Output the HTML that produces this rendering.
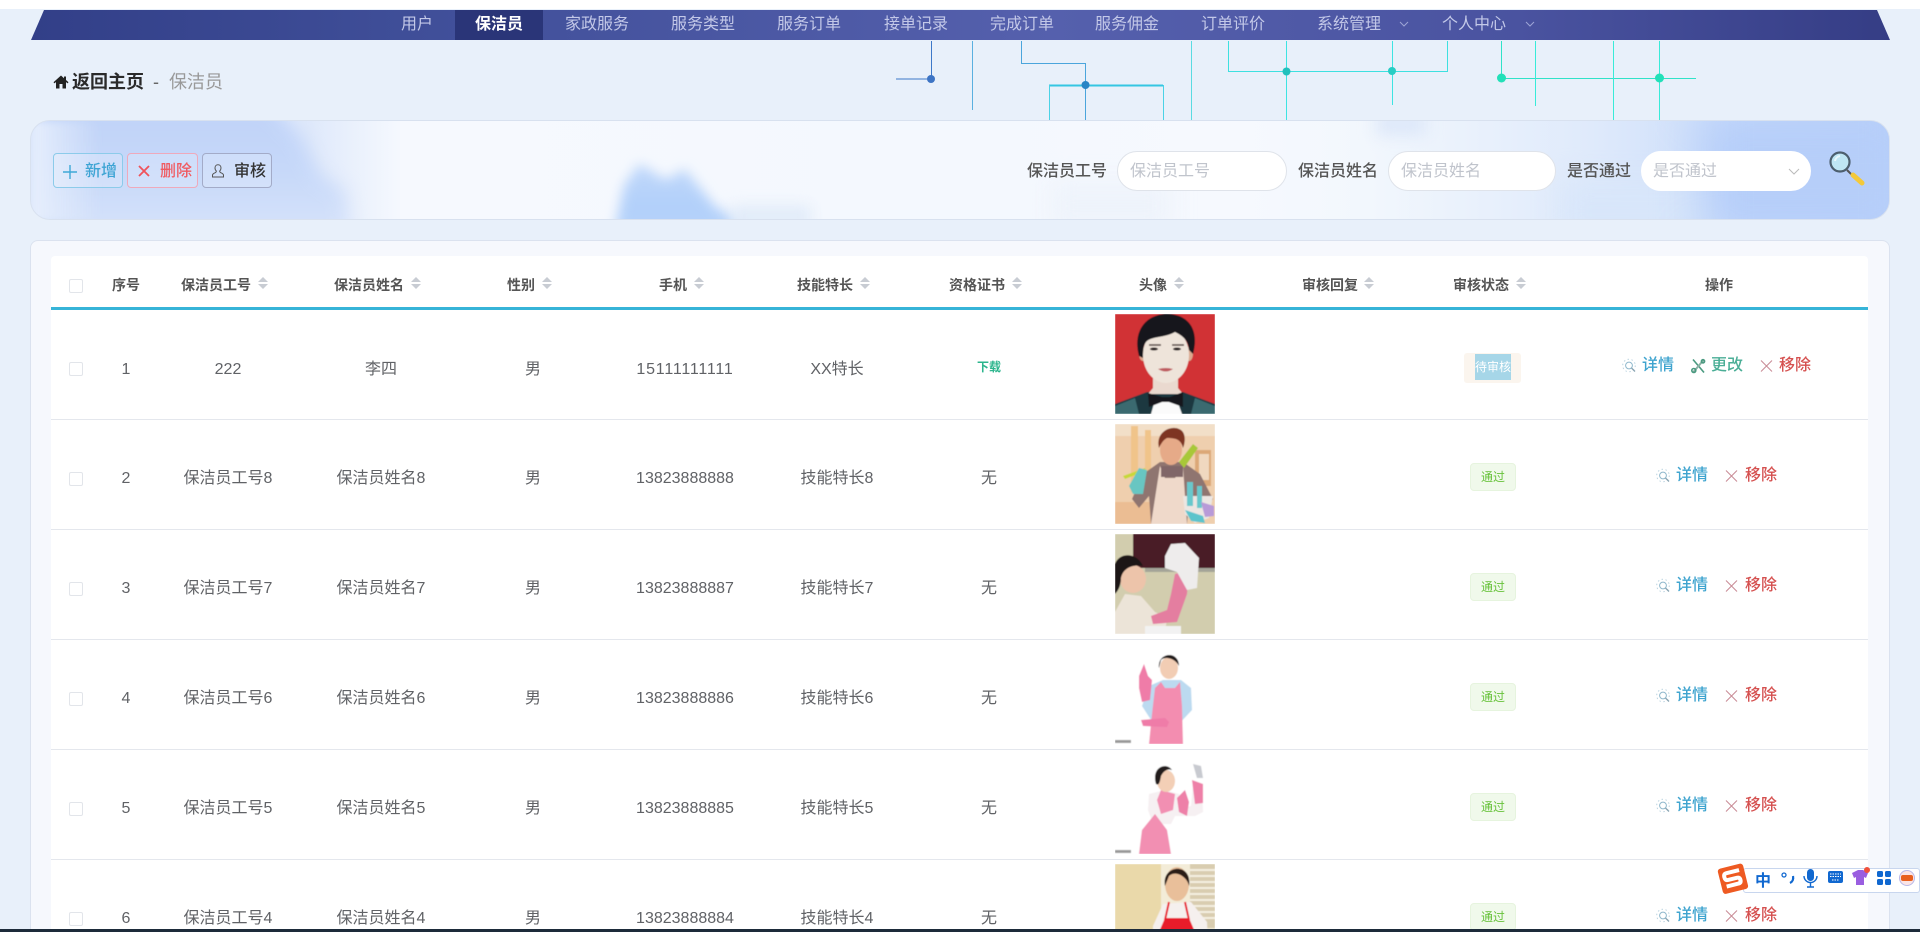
<!DOCTYPE html>
<html lang="zh"><head><meta charset="utf-8"><title>保洁员</title>
<style>
*{box-sizing:border-box}
html,body{margin:0;padding:0;width:1920px;height:932px;overflow:hidden;background:#e8f0fa}
body{position:relative;font-family:"Liberation Sans","Noto Sans CJK SC",sans-serif;color:#606266;font-size:16px}
.a{position:absolute;white-space:nowrap}
.c{position:absolute;white-space:nowrap;transform:translate(-50%,-50%);line-height:24px}
.t{position:absolute;white-space:nowrap;line-height:24px;transform:translateY(-50%);font-weight:500}
.nav{position:absolute;left:0;top:10px;height:30px;color:#c3c8e8;font-size:16px;line-height:30px;transform:translateX(-50%);white-space:nowrap}
.h{position:absolute;top:285px;transform:translateY(-50%);font-size:14px;font-weight:700;color:#555;line-height:20px;white-space:nowrap}
.s{position:absolute;top:277px;width:10px;height:12px}
.s:before,.s:after{content:"";position:absolute;left:0;border-left:5px solid transparent;border-right:5px solid transparent}
.s:before{top:0;border-bottom:5px solid #c8ccd3}
.s:after{bottom:0;border-top:5px solid #c8ccd3}
.cb{position:absolute;left:69px;width:14px;height:14px;border:1px solid #e2e5ea;border-radius:2px;background:#fff}
.ln{position:absolute;left:51px;width:1817px;height:1px;background:#e4e7ed}
.btn{position:absolute;top:153px;height:35px;border-radius:4px;border:1px solid;background:rgba(255,255,255,.18)}
.inp{position:absolute;top:151px;height:40px;border-radius:20px;background:#fff;border:1px solid #dfe3ea;font-size:16px;line-height:40px;color:#c0c4cc;padding-left:12px}
.lab{position:absolute;top:160px;line-height:24px;font-size:16px;font-weight:500;color:#555;white-space:nowrap}
.pic{position:absolute;left:1115px;width:100px;height:100px;display:block}
.tg{position:absolute;transform:translate(-50%,-50%);left:1493px;width:46px;height:28px;background:#f0f9eb;border:1px solid #e6f4de;border-radius:4px;color:#67c23a;font-size:12px;line-height:26px;text-align:center}
.ic{position:absolute;width:15px;height:15px;transform:translateY(-50%)}
.bl{color:#3fa4cf}.gr{color:#4aae96}.rd{color:#d5504f}
</style></head><body>
<!-- top white -->
<div class="a" style="left:0;top:0;width:1920px;height:9px;background:#fff"></div>

<!-- nav -->
<svg class="a" style="left:0;top:10px" width="1920" height="30">
<defs><linearGradient id="ng" x1="0" x2="1" y1="0" y2="0">
<stop offset="0" stop-color="#323f88"/><stop offset=".2" stop-color="#3f4e98"/><stop offset=".55" stop-color="#5560ad"/><stop offset=".8" stop-color="#4a53a0"/><stop offset="1" stop-color="#353d85"/></linearGradient>
<filter id="sf" x="0" y="0" width="100%" height="100%"><feGaussianBlur stdDeviation=".6"/></filter></defs>
<polygon points="44,0 1877,0 1890,30 31,30" fill="url(#ng)"/>
<rect x="455" y="0" width="88" height="30" fill="#2a3578"/>
</svg>
<div class="nav" style="left:417px">用户</div>
<div class="nav" style="left:499px;color:#fff;font-weight:700">保洁员</div>
<div class="nav" style="left:597px">家政服务</div>
<div class="nav" style="left:703px">服务类型</div>
<div class="nav" style="left:809px">服务订单</div>
<div class="nav" style="left:916px">接单记录</div>
<div class="nav" style="left:1022px">完成订单</div>
<div class="nav" style="left:1127px">服务佣金</div>
<div class="nav" style="left:1233px">订单评价</div>
<div class="nav" style="left:1349px">系统管理</div>
<div class="nav" style="left:1474px">个人中心</div>
<svg class="a" style="left:1399px;top:21px" width="10" height="6"><path d="M1 1l4 4 4-4" fill="none" stroke="#9ea5d6"/></svg>
<svg class="a" style="left:1525px;top:21px" width="10" height="6"><path d="M1 1l4 4 4-4" fill="none" stroke="#9ea5d6"/></svg>

<!-- circuits -->
<svg class="a" style="left:0;top:0" width="1920" height="125" fill="none">
<g stroke="#3d78c8"><path d="M931.5 41V79M896 79H931"/></g><circle cx="931" cy="79" r="4" fill="#3d74c4"/>
<path d="M972.5 41V110" stroke="#5ab0e0"/>
<path d="M1021.5 41V63.5H1085.5V120" stroke="#4aa5dc"/>
<path d="M1049 85.5H1163" stroke="#35c6e2" stroke-width="2"/>
<path d="M1049.5 85V120M1163.5 85V120" stroke="#4ad2e6"/>
<circle cx="1085.5" cy="85" r="4" fill="#2a85c5"/>
<path d="M1191.5 41V120" stroke="#5adbe2"/>
<path d="M1228.5 41V71.5H1447.5V41" stroke="#3de0e0"/>
<path d="M1286.5 41V120M1392.5 41V105" stroke="#3de4e2"/>
<circle cx="1286.5" cy="71.5" r="4" fill="#22c0bc"/><circle cx="1392" cy="71" r="4" fill="#28cdc4"/>
<path d="M1501.5 41V78M1501 78.5H1696" stroke="#30e2c8"/>
<path d="M1535.5 41V106M1613.5 41V120M1659.5 41V120" stroke="#38ebd8"/>
<circle cx="1501.5" cy="78" r="4.5" fill="#22e0b8"/><circle cx="1659.5" cy="78" r="4.5" fill="#22e0b8"/>
</svg>

<!-- breadcrumb -->
<svg class="a" style="left:53px;top:74px" width="16" height="16" viewBox="0 0 16 16"><path d="M8 1.5 0.500 8.300l1 1.100L3 8v6.500h3.500V10h3v4.500H13V8l1.500 1.400 1-1.100L13 6V2.500h-2v1.700z" fill="#222"/></svg>
<div class="a" style="left:72px;top:70px;font-size:18px;line-height:24px;font-weight:700;color:#2a2a2a">返回主页</div>
<div class="a" style="left:153px;top:70px;font-size:18px;line-height:24px;color:#666">-</div>
<div class="a" style="left:169px;top:70px;font-size:18px;line-height:24px;color:#999">保洁员</div>

<!-- toolbar -->
<div class="a" style="left:30px;top:120px;width:1860px;height:100px;border-radius:20px;overflow:hidden;background:linear-gradient(90deg,#e4ecfb 0,#dfe9fb 15%,#f6f9fe 20%,#f4f8fe 50%,#f6f9fe 65%,#f2f7fd 72%,#dfeafb 84%,#c4d8fa 94%,#b8cff9 100%);border:1px solid #d8e1ef">
<div class="a" style="left:0;top:-20px;width:320px;height:150px;filter:blur(9px)"><div style="width:100%;height:100%;background:linear-gradient(180deg,#bfd2f8 0,#c6d8f9 45%,#dbe6fb 100%);clip-path:polygon(0 0,74% 0,84% 22%,90% 48%,98% 60%,100% 100%,0 100%)"></div></div>
<div class="a" style="left:0;top:0;width:70px;height:100px;background:linear-gradient(90deg,#e6eefc,rgba(230,238,252,0));filter:blur(4px)"></div>
<div class="a" style="left:555px;top:30px;width:190px;height:90px;filter:blur(6px)"><div style="width:100%;height:100%;background:linear-gradient(180deg,#c6dbfb 0,#b2d0fa 60%,#b8d4fa 100%);clip-path:polygon(14% 100%,20% 38%,28% 14%,42% 32%,52% 20%,68% 62%,100% 100%)"></div></div>
<div class="a" style="left:700px;top:84px;width:80px;height:24px;background:#e2ecf9;filter:blur(7px)"></div>
<div class="a" style="left:1020px;top:60px;width:120px;height:50px;background:#eef3fb;filter:blur(12px)"></div>
<div class="a" style="left:1345px;top:-8px;width:50px;height:22px;background:#dce7f9;filter:blur(8px)"></div>
<div class="a" style="left:1530px;top:60px;width:180px;height:60px;background:#d8e6fa;filter:blur(14px)"></div>
<div class="a" style="left:1670px;top:-10px;width:210px;height:130px;background:#b6cef9;filter:blur(22px)"></div>
</div>

<!-- buttons -->
<div class="btn" style="left:53px;width:70px;border-color:#8ccbea"></div>
<div class="btn" style="left:127px;width:71px;border-color:#efa9bb"></div>
<div class="btn" style="left:202px;width:70px;border-color:#a3abc8"></div>
<svg class="a" style="left:63px;top:165px" width="14" height="14"><path d="M7 0V14M0 7H14" stroke="#3ea8d8" stroke-width="1.400"/></svg>
<div class="a" style="left:85px;top:160px;line-height:24px;font-weight:500;color:#3ea4d4">新增</div>
<svg class="a" style="left:138px;top:165px" width="12" height="12"><path d="M1 1 11 11M11 1 1 11" stroke="#f0525a" stroke-width="1.800"/></svg>
<div class="a" style="left:160px;top:160px;line-height:24px;font-weight:500;color:#f05a60">删除</div>
<svg class="a" style="left:212px;top:164px" width="12" height="14" viewBox="0 0 12 14" fill="none" stroke="#555"><path d="M6 .8c-1.900 0-3 1.400-3 3.200 0 1.300.5 2.300 1.300 3 .2.800-.3 1.300-1.300 1.800-1.300.600-2.500 1-2.500 2.300v1.900h11v-1.900c0-1.300-1.200-1.700-2.500-2.300-1-.5-1.500-1-1.300-1.800.8-.7 1.300-1.700 1.300-3 0-1.800-1.100-3.200-3-3.200z"/></svg>
<div class="a" style="left:234px;top:160px;line-height:24px;font-weight:500;color:#333">审核</div>

<!-- search -->
<div class="lab" style="left:1027px">保洁员工号</div>
<div class="inp" style="left:1117px;width:170px">保洁员工号</div>
<div class="lab" style="left:1298px">保洁员姓名</div>
<div class="inp" style="left:1388px;width:168px">保洁员姓名</div>
<div class="lab" style="left:1567px">是否通过</div>
<div class="inp" style="left:1641px;width:170px;border-color:#fff;padding-left:11px">是否通过</div>
<svg class="a" style="left:1788px;top:168px" width="12" height="7"><path d="M1 1l5 5 5-5" fill="none" stroke="#bbb"/></svg>
<svg class="a" style="left:1825px;top:148px" width="42" height="40" fill="none">
<path d="M22 22 29 29" stroke="#555" stroke-width="2"/>
<path d="M28 27 37 35" stroke="#f4c93a" stroke-width="5" stroke-linecap="round"/>
<circle cx="15" cy="14" r="9.500" fill="#bfe6f4" stroke="#4d5f6e" stroke-width="2.200"/>
<path d="M10 13a6 6 0 0 1 5-5" stroke="#eaf8fc" stroke-width="2"/>
</svg>

<!-- table card -->
<div class="a" style="left:30px;top:240px;width:1860px;height:700px;border:1px solid #dbe2ef;border-radius:8px;background:#f6f8fd"></div>
<div class="a" style="left:51px;top:256px;width:1817px;height:680px;background:#fff;border-radius:4px 4px 0 0"></div>

<div class="cb" style="top:279px"></div>
<div class="h" style="left:112px">序号</div>
<div class="h" style="left:181px">保洁员工号</div><i class="s" style="left:258px"></i>
<div class="h" style="left:334px">保洁员姓名</div><i class="s" style="left:411px"></i>
<div class="h" style="left:507px">性别</div><i class="s" style="left:542px"></i>
<div class="h" style="left:659px">手机</div><i class="s" style="left:694px"></i>
<div class="h" style="left:797px">技能特长</div><i class="s" style="left:860px"></i>
<div class="h" style="left:949px">资格证书</div><i class="s" style="left:1012px"></i>
<div class="h" style="left:1139px">头像</div><i class="s" style="left:1174px"></i>
<div class="h" style="left:1302px">审核回复</div><i class="s" style="left:1364px"></i>
<div class="h" style="left:1453px">审核状态</div><i class="s" style="left:1516px"></i>
<div class="h" style="left:1705px">操作</div>
<div class="a" style="left:51px;top:307px;width:1817px;height:3px;background:#36b4d8"></div>

<div class="ln" style="top:419px"></div><div class="ln" style="top:529px"></div><div class="ln" style="top:639px"></div><div class="ln" style="top:749px"></div><div class="ln" style="top:859px"></div>

<svg width="0" height="0" style="position:absolute"><defs>
<g id="dI" fill="none"><circle cx="7" cy="7" r="6.300" stroke="#bcd4e0" stroke-dasharray="1.500 2.500"/><circle cx="7" cy="7" r="3.400" stroke="#8fb8cc"/><path d="M9.500 9.500l3.500 3.500" stroke="#8aa4b2" stroke-width="1.300"/></g>
<g id="xI" fill="none" stroke="#c88a94"><path d="M2 2 13 13M13 2 2 13"/></g>
<g id="eI" fill="none" stroke="#4a9a80" stroke-width="1.600"><path d="M2 1 13 14"/><path d="M13 1 2 14" stroke="#8ab0a4" stroke-width="2"/><circle cx="2.800" cy="12" r="2"/><circle cx="12" cy="2.800" r="1.600"/></g>
</defs></svg>

<!-- row 1 -->
<div class="cb" style="top:362px"></div>
<div class="c" style="left:126px;top:370px">1</div><div class="c" style="left:228px;top:370px">222</div><div class="c" style="left:381px;top:370px">李四</div><div class="c" style="left:533px;top:370px">男</div><div class="c" style="left:685px;top:370px;letter-spacing:.8px">15111111111</div><div class="c" style="left:837px;top:370px">XX特长</div>
<div class="c" style="left:989px;top:367px;font-size:12px;font-weight:700;color:#2cb58d">下载</div>
<svg class="pic" style="top:314px" viewBox="0 0 100 100"><g filter="url(#sf)">
<rect width="100" height="100" fill="#d13035"/>
<path d="M0 90 32 78 68 78 100 90V100H0z" fill="#1b3840"/>
<path d="M0 92 20 84 24 100H0zM100 92 80 84 76 100H100z" fill="#3a6a70"/>
<path d="M38 56H63V74L68 80H33L38 74z" fill="#ead9cf"/>
<path d="M36 100 40 86H62L67 100z" fill="#fbfbfb"/>
<path d="M33 79 47 83H55L68 78 68 93 54 88H47L34 93z" fill="#15161a"/>
<ellipse cx="28" cy="40" rx="4" ry="7" fill="#dca98f"/><ellipse cx="74" cy="40" rx="4" ry="7" fill="#dca98f"/>
<ellipse cx="51" cy="41" rx="23" ry="28" fill="#eee4da"/>
<path d="M24 42C17 16 32 0 52 0S85 14 78 40L74 36C73 26 68 22 60 18 50 24 36 22 31 28 28 32 28 38 28 44z" fill="#15151c"/>
<path d="M34 31h12M57 31h12" stroke="#4a3a36" stroke-width="1.500"/><ellipse cx="39" cy="35" rx="4" ry="1.500" fill="#2a2020"/><ellipse cx="62" cy="35" rx="4" ry="1.500" fill="#2a2020"/>
<path d="M43 55q8-2 15 0q-7 5-15 0z" fill="#bf5c60"/>
</g></svg>
<div class="a" style="left:1464px;top:353px;width:57px;height:30px;background:#fbf5ee;border-radius:3px"></div>
<div class="a" style="left:1475px;top:354px;width:36px;height:26px;background:#a6d6e8;color:#fff;font-size:12px;line-height:26px;text-align:center;overflow:hidden">待审核</div>
<svg class="ic" style="left:1622px;top:366px"><use href="#dI"/></svg><div class="t bl" style="left:1642px;top:366px">详情</div>
<svg class="ic" style="left:1691px;top:366px"><use href="#eI"/></svg><div class="t gr" style="left:1711px;top:366px">更改</div>
<svg class="ic" style="left:1759px;top:366px"><use href="#xI"/></svg><div class="t rd" style="left:1779px;top:366px">移除</div>

<!-- row 2 -->
<div class="cb" style="top:472px"></div>
<div class="c" style="left:126px;top:479px">2</div><div class="c" style="left:228px;top:479px">保洁员工号8</div><div class="c" style="left:381px;top:479px">保洁员姓名8</div><div class="c" style="left:533px;top:479px">男</div><div class="c" style="left:685px;top:479px">13823888888</div><div class="c" style="left:837px;top:479px">技能特长8</div><div class="c" style="left:989px;top:479px">无</div>
<svg class="pic" style="top:424px" viewBox="0 0 100 100"><g filter="url(#sf)">
<rect width="100" height="100" fill="#efcfae"/>
<rect x="0" y="0" width="100" height="12" fill="#f2dfc8"/>
<path d="M16 2h7v66h-7zM30 6h6v56h-6z" fill="#f0c48a"/><rect x="80" y="26" width="16" height="36" fill="#dca878"/><rect x="84" y="30" width="10" height="26" fill="#f0d8c0"/>
<rect y="78" width="55" height="22" fill="#e8b080" opacity=".6"/>
<path d="M17 75 28 50 45 38 68 38 85 50 98 75 92 84 75 70 72 100H36L34 72 24 84z" fill="#8f7470"/>
<path d="M45 42 36 100H72L70 72 68 42 60 54H50z" fill="#efd9ca"/>
<path d="M46 42h22v11H46z" fill="#806668"/>
<ellipse cx="56" cy="26" rx="11" ry="15" fill="#e6aa88"/>
<path d="M44 24C40 8 56 1 64 5 72 8 70 20 68 24 66 16 62 14 52 14 48 16 46 20 44 24z" fill="#7e3524"/>
<path d="M64 38 78 20 83 24 69 44z" fill="#a8c838"/><path d="M8 52 30 44 31 47 10 55z" fill="#c8d838"/>
<path d="M14 62 24 44 32 46 30 58 28 70H18z" fill="#68c6c2"/>
<path d="M68 72H98L94 94 80 99 70 90z" fill="#ece6e2"/><path d="M70 86 88 92 90 99 76 97z" fill="#5cc4cc"/>
<path d="M72 58h6v24h-6zM82 62h5v22h-5z" fill="#68c8cc"/><path d="M86 78 99 82 99 92 90 93z" fill="#b89ad8"/>
</g></svg>
<div class="tg" style="top:477px">通过</div>
<svg class="ic" style="left:1656px;top:476px"><use href="#dI"/></svg><div class="t bl" style="left:1676px;top:476px">详情</div>
<svg class="ic" style="left:1724px;top:476px"><use href="#xI"/></svg><div class="t rd" style="left:1745px;top:476px">移除</div>

<!-- row 3 -->
<div class="cb" style="top:582px"></div>
<div class="c" style="left:126px;top:589px">3</div><div class="c" style="left:228px;top:589px">保洁员工号7</div><div class="c" style="left:381px;top:589px">保洁员姓名7</div><div class="c" style="left:533px;top:589px">男</div><div class="c" style="left:685px;top:589px">13823888887</div><div class="c" style="left:837px;top:589px">技能特长7</div><div class="c" style="left:989px;top:589px">无</div>
<svg class="pic" style="top:534px" viewBox="0 0 100 100"><g filter="url(#sf)">
<rect width="100" height="100" fill="#d2cdae"/>
<rect x="18" width="82" height="34" fill="#4a1f26"/>
<rect x="30" y="34" width="70" height="4" fill="#a4a498"/>
<path d="M0 78 10 60 26 62 40 78 52 84 50 100H0z" fill="#ece4d8"/>
<path d="M36 82 52 76 56 60 60 40 74 36 72 60 62 88 38 90z" fill="#e47ea0"/>
<path d="M50 22 56 10 70 9 84 24 82 54 72 56 62 38 50 34z" fill="#eeecec"/>
<ellipse cx="18" cy="45" rx="13" ry="14" fill="#edc4aa"/>
<path d="M0 56V30C4 18 22 18 28 32 18 30 8 34 6 44 6 50 4 56 0 60z" fill="#1e1614"/>
<rect x="30" y="92" width="36" height="8" fill="#f2f2f2"/>
</g></svg>
<div class="tg" style="top:587px">通过</div>
<svg class="ic" style="left:1656px;top:586px"><use href="#dI"/></svg><div class="t bl" style="left:1676px;top:586px">详情</div>
<svg class="ic" style="left:1724px;top:586px"><use href="#xI"/></svg><div class="t rd" style="left:1745px;top:586px">移除</div>

<!-- row 4 -->
<div class="cb" style="top:692px"></div>
<div class="c" style="left:126px;top:699px">4</div><div class="c" style="left:228px;top:699px">保洁员工号6</div><div class="c" style="left:381px;top:699px">保洁员姓名6</div><div class="c" style="left:533px;top:699px">男</div><div class="c" style="left:685px;top:699px">13823888886</div><div class="c" style="left:837px;top:699px">技能特长6</div><div class="c" style="left:989px;top:699px">无</div>
<svg class="pic" style="top:644px" viewBox="0 0 100 100"><g filter="url(#sf)">
<rect width="100" height="100" fill="#fff"/>
<path d="M34 42 48 36 66 36 76 44 77 66 62 82H40L27 62z" fill="#bcdaf0"/>
<path d="M40 44 46 38 50 44H60L65 38 67 62 68 100H34L37 70z" fill="#f38db0"/>
<path d="M24 32 29 20 33 32 37 36 35 56 27 58 24 44z" fill="#ef7ca8"/>
<path d="M26 76 50 74 54 78 52 83 28 82z" fill="#ef7ca8"/>
<ellipse cx="54" cy="24" rx="9" ry="11" fill="#f2cdb4"/>
<path d="M44 24C42 8 64 6 64 22 60 14 50 12 46 16z" fill="#221a1a"/>
<rect x="0" y="96" width="16" height="3" fill="#999"/>
</g></svg>
<div class="tg" style="top:697px">通过</div>
<svg class="ic" style="left:1656px;top:696px"><use href="#dI"/></svg><div class="t bl" style="left:1676px;top:696px">详情</div>
<svg class="ic" style="left:1724px;top:696px"><use href="#xI"/></svg><div class="t rd" style="left:1745px;top:696px">移除</div>

<!-- row 5 -->
<div class="cb" style="top:802px"></div>
<div class="c" style="left:126px;top:809px">5</div><div class="c" style="left:228px;top:809px">保洁员工号5</div><div class="c" style="left:381px;top:809px">保洁员姓名5</div><div class="c" style="left:533px;top:809px">男</div><div class="c" style="left:685px;top:809px">13823888885</div><div class="c" style="left:837px;top:809px">技能特长5</div><div class="c" style="left:989px;top:809px">无</div>
<svg class="pic" style="top:754px" viewBox="0 0 100 100"><g filter="url(#sf)">
<rect width="100" height="100" fill="#fff"/>
<path d="M34 40 50 36 64 40 66 54 76 52 78 30 87 30 88 58 80 62 60 62 56 70 38 70 33 56z" fill="#f6f0f2"/>
<path d="M46 36 42 46 46 60 58 56 60 40zM24 100 27 76 40 60 52 76 56 100z" fill="#f28fb2"/>
<path d="M62 44 70 36 74 48 72 62 64 58z" fill="#ee80a8"/><path d="M77 26 88 30 88 49 80 50z" fill="#ee80a8"/>
<path d="M78 10 86 12 88 24 82 24z" fill="#c8cad0"/>
<ellipse cx="51" cy="27" rx="9" ry="11" fill="#f3cfb6"/>
<path d="M41 30C36 12 52 8 57 16 52 14 48 18 46 22 45 28 44 32 41 30z" fill="#221a1a"/>
<rect x="0" y="96" width="16" height="3" fill="#999"/>
</g></svg>
<div class="tg" style="top:807px">通过</div>
<svg class="ic" style="left:1656px;top:806px"><use href="#dI"/></svg><div class="t bl" style="left:1676px;top:806px">详情</div>
<svg class="ic" style="left:1724px;top:806px"><use href="#xI"/></svg><div class="t rd" style="left:1745px;top:806px">移除</div>

<!-- row 6 -->
<div class="cb" style="top:912px"></div>
<div class="c" style="left:126px;top:919px">6</div><div class="c" style="left:228px;top:919px">保洁员工号4</div><div class="c" style="left:381px;top:919px">保洁员姓名4</div><div class="c" style="left:533px;top:919px">男</div><div class="c" style="left:685px;top:919px">13823888884</div><div class="c" style="left:837px;top:919px">技能特长4</div><div class="c" style="left:989px;top:919px">无</div>
<svg class="pic" style="top:864px" viewBox="0 0 100 100"><g filter="url(#sf)">
<rect width="100" height="100" fill="#ead9aa"/>
<rect x="46" width="54" height="100" fill="#f3ecd8"/>
<path d="M75 0h25v64H75z" fill="#d9cdb0"/>
<path d="M75 6h25M75 12h25M75 18h25M75 24h25M75 30h25M75 36h25M75 42h25M75 48h25M75 54h25" stroke="#f4efe2" stroke-width="2"/>
<path d="M38 62 48 40 76 38 92 58 94 100H38z" fill="#f5f0ee"/>
<path d="M44 68 50 54H74L80 68 84 100H44z" fill="#e81a2c"/><path d="M50 56 54 38M74 56 70 38" stroke="#e81a2c" stroke-width="2"/>
<ellipse cx="62" cy="20" rx="12" ry="17" fill="#e9bf9a"/>
<path d="M50 22C46 0 78 -2 74 22 72 12 60 6 54 12z" fill="#2c1c18"/>
</g></svg>
<div class="tg" style="top:917px">通过</div>
<svg class="ic" style="left:1656px;top:916px"><use href="#dI"/></svg><div class="t bl" style="left:1676px;top:916px">详情</div>
<svg class="ic" style="left:1724px;top:916px"><use href="#xI"/></svg><div class="t rd" style="left:1745px;top:916px">移除</div>

<!-- IME bar -->
<div class="a" style="left:1743px;top:868px;width:177px;height:25px;background:#fff;border:1px solid #c8d6ee;border-radius:3px"></div>
<svg class="a" style="left:1716px;top:862px" width="204" height="34">
<g transform="rotate(-14 16 17)"><rect x="4" y="4" width="26" height="26" rx="3" fill="#ee5a22"/><path d="M25 10H12q-3 0-3 3.500t3 3.500H21q3 0 3 3t-3 3H9" fill="none" stroke="#fff" stroke-width="4"/></g>
<text x="39" y="24" font-family="Liberation Sans,Noto Sans CJK SC,sans-serif" font-size="16" font-weight="700" fill="#1068d0">中</text>
<circle cx="68" cy="13" r="2" fill="none" stroke="#1068d0" stroke-width="1.300"/><path d="M77 14q1 5-3 7" stroke="#1068d0" stroke-width="2.200" fill="none"/>
<rect x="91" y="7" width="7" height="12" rx="3.500" fill="#1068d0"/><path d="M88 14a6.500 6.500 0 0 0 13 0M94.500 21v4M91 25h7" stroke="#1068d0" stroke-width="1.400" fill="none"/>
<rect x="112" y="9" width="15" height="12" rx="2" fill="#1068d0"/><path d="M114 12h11M114 14.500h11M116 18h7" stroke="#fff" stroke-dasharray="1.500 1"/>
<path d="M136 11 142 8H147L152 11 150 16 148 15V23H140V15L138 16z" fill="#9a5ee0"/><circle cx="151" cy="8" r="3" fill="#f0503a"/>
<rect x="161" y="9" width="6" height="6" rx="1.500" fill="#1068d0"/><rect x="169" y="9" width="6" height="6" rx="1.500" fill="#1068d0"/><rect x="161" y="17" width="6" height="6" rx="1.500" fill="#1068d0"/><rect x="169" y="17" width="6" height="6" rx="1.500" fill="#1068d0"/>
<circle cx="191" cy="16" r="7.500" fill="#fbe4e4" stroke="#b8b8e8"/><rect x="185" y="13" width="12" height="6" rx="2" fill="#e8601e"/>
</svg>

<!-- bottom strip -->
<div class="a" style="left:0;top:929px;width:1920px;height:3px;background:#1d2b3a"></div>
</body></html>
